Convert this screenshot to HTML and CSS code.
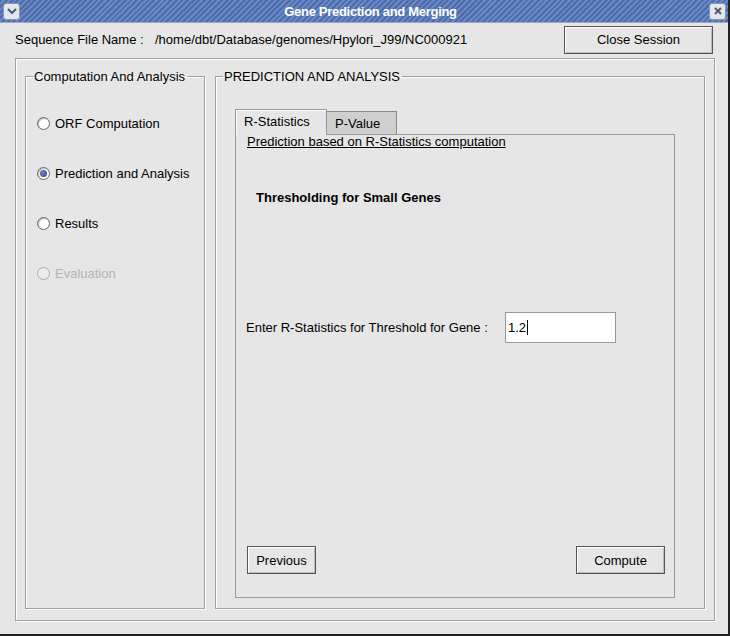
FILE: index.html
```html
<!DOCTYPE html>
<html>
<head>
<meta charset="utf-8">
<link rel="stylesheet" href="styles.css">
</head>
<body>
<div class="window">
  <div class="titlebar">
    <div class="tbtn">
      <svg width="12" height="10" viewBox="0 0 12 10"><path d="M2 3 L6 7 L10 3" fill="none" stroke="#4a5a78" stroke-width="2"/></svg>
    </div>
    <div class="title">Gene Prediction and Merging</div>
    <div class="tbtn">
      <svg width="10" height="10" viewBox="0 0 10 10"><path d="M2 2 L8 8 M8 2 L2 8" fill="none" stroke="#4a5a78" stroke-width="2"/></svg>
    </div>
  </div>
  <div class="content">
    <div class="toprow">
      <span class="label">Sequence File Name :</span>
      <span class="path">/home/dbt/Database/genomes/Hpylori_J99/NC000921</span>
      <button class="btn close">Close Session</button>
    </div>
    <div class="outer">
      <fieldset class="group left">
        <legend>Computation And Analysis</legend>
        <div class="radios">
          <div class="radio"><span class="dot"></span>ORF Computation</div>
          <div class="radio"><span class="dot on"></span>Prediction and Analysis</div>
          <div class="radio"><span class="dot"></span>Results</div>
          <div class="radio disabled"><span class="dot"></span>Evaluation</div>
        </div>
      </fieldset>
      <fieldset class="group right">
        <legend>PREDICTION AND ANALYSIS</legend>
        <div class="rbody">
          <div class="tabs">
            <div class="tab active">R-Statistics</div>
            <div class="tab">P-Value</div>
          </div>
          <div class="panel">
            <div class="heading">Prediction based on R-Statistics computation</div>
            <div class="bold">Thresholding for Small Genes</div>
            <div class="field">
              <span class="flabel">Enter R-Statistics for Threshold for Gene :</span>
              <div class="input">1.2<span class="caret"></span></div>
            </div>
            <div class="actions">
              <button class="btn prev">Previous</button>
              <button class="btn compute">Compute</button>
            </div>
          </div>
        </div>
      </fieldset>
    </div>
  </div>
</div>
</body>
</html>
```
FILE: styles.css
```css
html, body {
  margin: 0;
  padding: 0;
}
body {
  width: 730px;
  height: 636px;
  overflow: hidden;
  font-family: "Liberation Sans", Arial, sans-serif;
  font-size: 13px;
  color: #000;
}
.window {
  width: 730px;
  height: 636px;
  box-sizing: border-box;
  background: #e6e6e6;
  border-right: 2px solid #222;
  border-bottom: 2px solid #222;
  display: flex;
  flex-direction: column;
}
.titlebar {
  height: 22px;
  display: flex;
  align-items: center;
  padding: 0 2px 0 3px;
  background: repeating-linear-gradient(135deg, #4d6cab 0px, #4d6cab 2px, #6a88c4 2px, #6a88c4 4px);
  border-bottom: 1px solid #9aa8c0;
}
.title {
  flex: 1;
  text-align: center;
  color: #fff;
  font-weight: bold;
  font-family: "Liberation Sans", Arial, sans-serif;
  font-size: 13px;
  letter-spacing: -0.3px;
  padding-left: 12px;
}
.tbtn {
  width: 17px;
  height: 17px;
  box-sizing: border-box;
  background: #e4e6ea;
  border: 1px solid #8a96b0;
  border-radius: 3px;
  display: flex;
  align-items: center;
  justify-content: center;
}
.content {
  flex: 1;
  display: flex;
  flex-direction: column;
  padding: 3px 13px 13px 15px;
}
.toprow {
  height: 27px;
  display: flex;
  align-items: center;
  margin-bottom: 5px;
}
.label {
  width: 140px;
}
.path {
  flex: 1;
}
.btn {
  font: inherit;
  color: #000;
  background: #e6e6e6;
  border: 1px solid #555;
  box-shadow: inset 1px 1px 0 #fff, inset -1px -1px 0 #bbb;
  padding: 0;
  height: 28px;
}
.close {
  width: 149px;
  margin-right: 2px;
}
.outer {
  flex: 1;
  border: 1px solid #a0a0a0;
  box-shadow: inset 1px 1px 0 #fff, 1px 1px 0 #fff;
  display: flex;
  gap: 10px;
  padding: 10px 9px 11px 9px;
}
.group {
  margin: 0;
  padding: 0;
  border: 1px solid #a0a0a0;
  box-shadow: inset 1px 1px 0 #fff, 1px 1px 0 #fff;
  min-width: 0;
}
.group legend {
  padding: 0 2px 0 1px;
  margin-left: 7px;
  line-height: 15px;
}
.left {
  width: 178px;
  flex: none;
}
.right {
  flex: 1;
  display: flex;
  flex-direction: column;
}
.rbody {
  flex: 1;
  display: flex;
  flex-direction: column;
  padding: 25px 29px 10px 19px;
}
.radios {
  padding: 31px 0 0 11px;
  display: flex;
  flex-direction: column;
  gap: 34px;
}
.radio {
  height: 16px;
  display: flex;
  align-items: center;
}
.radio.disabled {
  color: #b4b4b4;
}
.dot {
  width: 11px;
  height: 11px;
  border: 1px solid #666;
  border-radius: 50%;
  background: #fff;
  margin-right: 5px;
  position: relative;
  box-shadow: inset 1px 1px 1px #bbb;
}
.disabled .dot {
  border-color: #aaa;
  background: #ededed;
  box-shadow: none;
}
.dot.on::after {
  content: "";
  position: absolute;
  left: 2px;
  top: 2px;
  width: 7px;
  height: 7px;
  border-radius: 50%;
  background: radial-gradient(circle at 40% 40%, #6f86c8, #2a3f88);
}
.tabs {
  display: flex;
  align-items: flex-end;
  height: 25px;
}
.tab {
  box-sizing: border-box;
  height: 24px;
  padding: 0 8px;
  border: 1px solid #888;
  border-bottom: none;
  display: flex;
  align-items: center;
}
.tab.active {
  height: 26px;
  width: 92px;
  background: #e6e6e6;
  border-color: #999;
  box-shadow: inset 1px 1px 0 #fff;
  margin-bottom: -1px;
  position: relative;
  z-index: 1;
  padding-bottom: 2px;
}
.tab:not(.active) {
  width: 70px;
  background: #cfcfcf;
  border-left: none;
  height: 23px;
}
.panel {
  flex: 1;
  border: 1px solid #999;
  display: flex;
  flex-direction: column;
  padding: 0 9px 23px 10px;
}
.heading {
  text-decoration: underline;
  margin-left: 1px;
  line-height: 14px;
}
.bold {
  font-weight: bold;
  margin: 41px 0 0 10px;
}
.field {
  display: flex;
  align-items: center;
  margin-top: 107px;
}
.flabel {
  width: 259px;
}
.input {
  width: 111px;
  height: 31px;
  box-sizing: border-box;
  background: #fff;
  border: 1px solid #999;
  display: flex;
  align-items: center;
  padding-left: 2px;
}
.caret {
  display: inline-block;
  width: 1px;
  height: 15px;
  background: #000;
  margin-left: 1px;
}
.actions {
  margin-top: auto;
  display: flex;
  justify-content: space-between;
}
.actions .btn {
  width: 69px;
}
.actions .prev {
  margin-left: 1px;
}
.actions .compute {
  width: 89px;
}
```
